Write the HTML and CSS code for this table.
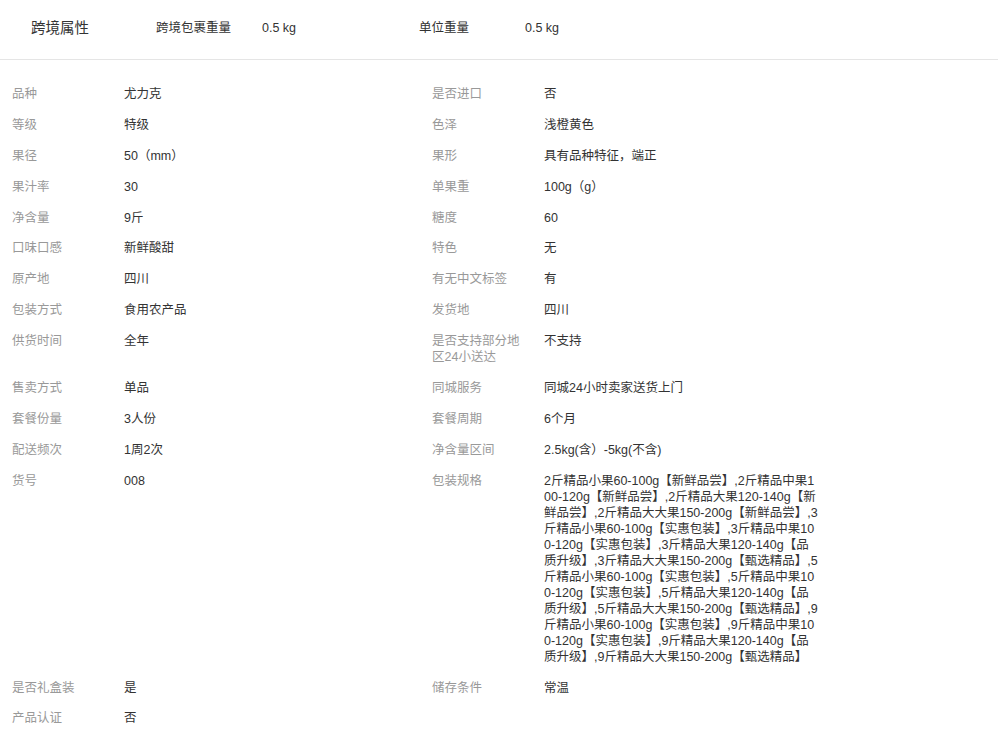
FILE: index.html
```html
<!DOCTYPE html>
<html lang="zh-CN">
<head>
<meta charset="utf-8">
<title>商品属性</title>
<link rel="stylesheet" href="styles.css">
</head>
<body>
<div class="page">
  <div class="cross">
    <div class="cross-title">跨境属性</div>
    <div class="cross-pair"><span class="cross-label">跨境包裹重量</span><span class="cross-value">0.5 kg</span></div>
    <div class="cross-pair"><span class="cross-label">单位重量</span><span class="cross-value">0.5 kg</span></div>
  </div>
  <div class="attrs">
    <div class="lbl">品种</div><div class="val">尤力克</div>
    <div class="lbl">是否进口</div><div class="val">否</div>

    <div class="lbl">等级</div><div class="val">特级</div>
    <div class="lbl">色泽</div><div class="val">浅橙黄色</div>

    <div class="lbl">果径</div><div class="val">50（mm）</div>
    <div class="lbl">果形</div><div class="val">具有品种特征，端正</div>

    <div class="lbl">果汁率</div><div class="val">30</div>
    <div class="lbl">单果重</div><div class="val">100g（g）</div>

    <div class="lbl">净含量</div><div class="val">9斤</div>
    <div class="lbl">糖度</div><div class="val">60</div>

    <div class="lbl">口味口感</div><div class="val">新鲜酸甜</div>
    <div class="lbl">特色</div><div class="val">无</div>

    <div class="lbl">原产地</div><div class="val">四川</div>
    <div class="lbl">有无中文标签</div><div class="val">有</div>

    <div class="lbl">包装方式</div><div class="val">食用农产品</div>
    <div class="lbl">发货地</div><div class="val">四川</div>

    <div class="lbl">供货时间</div><div class="val">全年</div>
    <div class="lbl">是否支持部分地区24小送达</div><div class="val">不支持</div>

    <div class="lbl">售卖方式</div><div class="val">单品</div>
    <div class="lbl">同城服务</div><div class="val">同城24小时卖家送货上门</div>

    <div class="lbl">套餐份量</div><div class="val">3人份</div>
    <div class="lbl">套餐周期</div><div class="val">6个月</div>

    <div class="lbl">配送频次</div><div class="val">1周2次</div>
    <div class="lbl">净含量区间</div><div class="val">2.5kg(含）-5kg(不含)</div>

    <div class="lbl">货号</div><div class="val">008</div>
    <div class="lbl">包装规格</div><div class="val">2斤精品小果60-100g【新鲜品尝】,2斤精品中果100-120g【新鲜品尝】,2斤精品大果120-140g【新鲜品尝】,2斤精品大大果150-200g【新鲜品尝】,3斤精品小果60-100g【实惠包装】,3斤精品中果100-120g【实惠包装】,3斤精品大果120-140g【品质升级】,3斤精品大大果150-200g【甄选精品】,5斤精品小果60-100g【实惠包装】,5斤精品中果100-120g【实惠包装】,5斤精品大果120-140g【品质升级】,5斤精品大大果150-200g【甄选精品】,9斤精品小果60-100g【实惠包装】,9斤精品中果100-120g【实惠包装】,9斤精品大果120-140g【品质升级】,9斤精品大大果150-200g【甄选精品】</div>

    <div class="lbl">是否礼盒装</div><div class="val">是</div>
    <div class="lbl">储存条件</div><div class="val">常温</div>

    <div class="lbl">产品认证</div><div class="val">否</div>
  </div>
</div>
</body>
</html>
```

FILE: styles.css
```css
html, body {
  margin: 0;
  padding: 0;
  background: #fff;
}

.page {
  font-family: "Liberation Sans", Arial, "Noto Sans CJK SC", sans-serif;
  color: #333;
  font-size: 12.5px;
  line-height: 16px;
}

.cross {
  display: flex;
  align-items: center;
  padding: 20px 0 23px 31px;
  border-bottom: 1px solid #e5e5e5;
}

.cross-title {
  width: 125px;
  font-size: 14.5px;
  color: #333;
}

.cross-pair {
  display: flex;
  width: 263px;
}

.cross-label {
  width: 106px;
  color: #333;
}

.cross-value {
  color: #333;
}

.attrs {
  display: grid;
  grid-template-columns: 112px 308px 112px 275px;
  row-gap: 14.9px;
  padding: 26px 0 0 12px;
}

.lbl {
  color: #999;
  padding-right: 16px;
  word-break: break-all;
}

.val {
  color: #333;
  word-break: break-all;
}
```
